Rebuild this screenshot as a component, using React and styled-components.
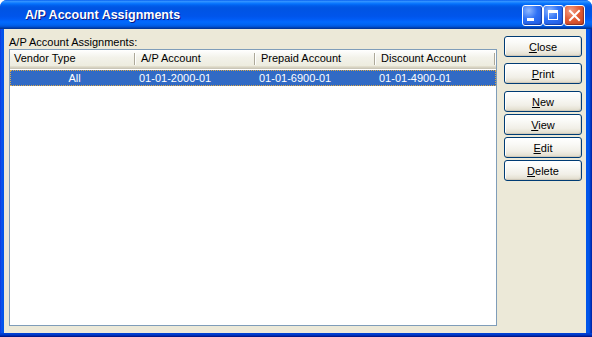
import React from 'react';
import styled, { createGlobalStyle } from 'styled-components';

const Global = createGlobalStyle`
  html, body { margin: 0; padding: 0; background: #ffffff; }
  body { font-family: "Liberation Sans", Arial, sans-serif; font-size: 11px; }
  * { box-sizing: border-box; }
`;

const Window = styled.div`
  width: 592px;
  height: 337px;
  display: flex;
  flex-direction: column;
  background: linear-gradient(90deg, #0831d9 0px, #0f50ec 1px, #0055ea 3px, #0055ea calc(100% - 3px), #0043d0 calc(100% - 2px), #001ea0 100%);
  border-radius: 7px 7px 0 0;
  overflow: hidden;
  padding: 0 6px 0 4px;
`;

const TitleBar = styled.div`
  height: 29px;
  margin: 0 -6px 0 -4px;
  display: flex;
  align-items: center;
  padding: 0 7px 0 25px;
  background: linear-gradient(180deg,
    #0058ee 0%, #3593ff 4%, #288eff 7%, #127dff 10%, #036ffc 14%,
    #0262ee 18%, #0057e5 24%, #0054e3 30%, #0055eb 56%, #005bf5 66%,
    #026afe 76%, #0062ef 86%, #0052d6 92%, #0040ab 96%, #003092 100%);
`;

const Title = styled.div`
  flex: 1;
  color: #ffffff;
  font-family: "Liberation Sans", Arial, sans-serif;
  font-weight: bold;
  font-size: 12.5px;
  text-shadow: 1px 1px 0 #0a1883;
  padding-top: 1px;
`;

const Controls = styled.div`
  display: flex;
  margin-top: 1px;
`;

const CtlButton = styled.div`
  width: 21px;
  height: 21px;
  border: 1px solid #ffffff;
  border-radius: 3px;
  display: flex;
  align-items: center;
  justify-content: center;
  background: ${p => p.$close
    ? 'radial-gradient(circle at 30% 25%, #f3a088 0%, #e25c35 45%, #c8401e 100%)'
    : 'radial-gradient(circle at 30% 25%, #8fb8ff 0%, #2f71f5 45%, #1d56e0 100%)'};
  box-shadow: inset -1px -1px 1px rgba(0,0,40,0.35);
`;

const Client = styled.div`
  flex: 1;
  background: #ece9d8;
  display: flex;
  gap: 7px;
  padding: 7px 4px 7px 5px;
`;

const Bottom = styled.div`
  height: 4px;
  margin: 0 -6px 0 -4px;
  background: linear-gradient(180deg, #0043d8 0px, #0039c8 2px, #001e9a 3px, #00137a 4px);
`;

const Main = styled.div`
  width: 488px;
  display: flex;
  flex-direction: column;
`;

const Label = styled.div`
  height: 13px;
  line-height: 13px;
  color: #000;
  font-size: 11px;
`;

const ListBox = styled.div`
  flex: 1;
  background: #ffffff;
  border: 1px solid #7f9db9;
  display: flex;
  flex-direction: column;
`;

const Grid = styled.div`
  display: grid;
  grid-template-columns: 126px 120px 120px 120px;
`;

const Header = styled(Grid)`
  height: 19px;
  background: linear-gradient(180deg, #ffffff 0%, #f3f2ea 40%, #ebeadb 100%);
  box-shadow: inset 0 -1px 0 #cbc7b8, inset 0 -2px 0 #d6d2c2, inset 0 -3px 0 #e2decd;
`;

const HeadCell = styled.div`
  position: relative;
  padding-left: ${p => (p.$first ? 4 : 5)}px;
  line-height: 17px;
  color: #000;
  white-space: nowrap;
  &::after {
    content: '';
    position: absolute;
    right: 1px;
    top: 3px;
    bottom: 4px;
    width: 1px;
    background: #aca899;
    box-shadow: 1px 0 0 #ffffff;
  }
`;

const Row = styled(Grid)`
  margin-top: 1px;
  height: 16px;
  background: #316ac5;
  color: #ffffff;
  outline: 1px dotted #d9a84a;
  outline-offset: -1px;
`;

const Cell = styled.div`
  line-height: 16px;
  padding-left: 3px;
  text-align: ${p => (p.$center ? 'center' : 'left')};
  white-space: nowrap;
`;

const Buttons = styled.div`
  width: 78px;
  display: flex;
  flex-direction: column;
`;

const Button = styled.button`
  width: 78px;
  height: 21px;
  margin-top: ${p => p.$gap || 0}px;
  border: 1px solid #003c74;
  border-radius: 3px;
  padding: 0;
  background: linear-gradient(180deg, #ffffff 0%, #fafaf7 30%, #f1efe7 70%, #e6e2d4 90%, #d8d2c2 100%);
  box-shadow: inset -1px -1px 0 rgba(200,194,178,0.6), inset 1px 1px 0 #ffffff;
  font-family: "Liberation Sans", Arial, sans-serif;
  font-size: 11px;
  color: #000;
  line-height: 18px;
`;

const MinIcon = () => (
  <svg width="19" height="19" viewBox="0 0 19 19">
    <rect x="4" y="12" width="7" height="3" fill="#fff" />
  </svg>
);
const MaxIcon = () => (
  <svg width="19" height="19" viewBox="0 0 19 19">
    <rect x="4.5" y="4.5" width="9" height="9" fill="none" stroke="#fff" strokeWidth="1" />
    <rect x="4" y="4" width="10" height="3" fill="#fff" />
  </svg>
);
const CloseIcon = () => (
  <svg width="19" height="19" viewBox="0 0 19 19">
    <path d="M5 5 L14 14 M14 5 L5 14" stroke="#fff" strokeWidth="2" strokeLinecap="square" />
  </svg>
);

const columns = ['Vendor Type', 'A/P Account', 'Prepaid Account', 'Discount Account'];
const rows = [['All', '01-01-2000-01', '01-01-6900-01', '01-01-4900-01']];

const buttons = [
  { key: 'C', rest: 'lose', gap: 0 },
  { key: 'P', rest: 'rint', gap: 6 },
  { key: 'N', rest: 'ew', gap: 7 },
  { key: 'V', rest: 'iew', gap: 2 },
  { key: 'E', rest: 'dit', gap: 2 },
  { key: 'D', rest: 'elete', gap: 2 },
];

export default function App() {
  return (
    <>
      <Global />
      <Window>
        <TitleBar>
          <Title>A/P Account Assignments</Title>
          <Controls>
            <CtlButton><MinIcon /></CtlButton>
            <CtlButton><MaxIcon /></CtlButton>
            <CtlButton $close><CloseIcon /></CtlButton>
          </Controls>
        </TitleBar>
        <Client>
          <Main>
            <Label>A/P Account Assignments:</Label>
            <ListBox>
              <Header>
                {columns.map((c, i) => (
                  <HeadCell key={c} $first={i === 0}>{c}</HeadCell>
                ))}
              </Header>
              {rows.map((r, i) => (
                <Row key={i}>
                  {r.map((v, j) => (
                    <Cell key={j} $center={j === 0}>{v}</Cell>
                  ))}
                </Row>
              ))}
            </ListBox>
          </Main>
          <Buttons>
            {buttons.map(b => (
              <Button key={b.key} $gap={b.gap}><u>{b.key}</u>{b.rest}</Button>
            ))}
          </Buttons>
        </Client>
        <Bottom />
      </Window>
    </>
  );
}
